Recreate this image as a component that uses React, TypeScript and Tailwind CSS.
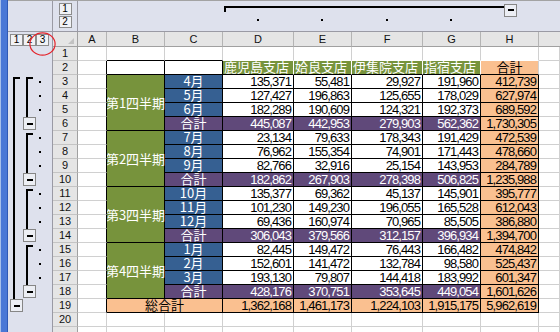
import React from 'react';

const NUM = "font-['Liberation_Sans',sans-serif] text-[13px] tracking-[-0.9px] leading-[13px] overflow-hidden";
const CJK = "font-['Noto_Sans_CJK_JP',sans-serif] text-[13px] leading-[13px] pb-[1px]";
const HDR = "font-['Liberation_Sans',sans-serif] text-[11px] leading-[13px] text-[#111]";
const BTN =
  "w-[13px] h-[12px] border border-[#8c8c8c] bg-[#f1f2f6] flex items-center justify-center font-['Liberation_Sans',sans-serif] text-[10px] leading-none text-black";

type Bg = 'w' | 'g' | 'b' | 'p' | 'o';
const BG: Record<Bg, string> = {
  w: 'bg-white',
  g: 'bg-[#77933c]',
  b: 'bg-[#366092]',
  p: 'bg-[#60497a]',
  o: 'bg-[#fac090]',
};
type Bd = 'k' | 'x' | 'n';
const BR: Record<Bd, string> = { k: 'border-r-black', x: 'border-r-[#d0d0d0]', n: 'border-r-white' };
const BB: Record<Bd, string> = { k: 'border-b-black', x: 'border-b-[#d0d0d0]', n: 'border-b-white' };

const data: Record<number, string[]> = {
  3: ['135,371', '55,481', '29,927', '191,960', '412,739'],
  4: ['127,427', '196,863', '125,655', '178,029', '627,974'],
  5: ['182,289', '190,609', '124,321', '192,373', '689,592'],
  6: ['445,087', '442,953', '279,903', '562,362', '1,730,305'],
  7: ['23,134', '79,633', '178,343', '191,429', '472,539'],
  8: ['76,962', '155,354', '74,901', '171,443', '478,660'],
  9: ['82,766', '32,916', '25,154', '143,953', '284,789'],
  10: ['182,862', '267,903', '278,398', '506,825', '1,235,988'],
  11: ['135,377', '69,362', '45,137', '145,901', '395,777'],
  12: ['101,230', '149,230', '196,055', '165,528', '612,043'],
  13: ['69,436', '160,974', '70,965', '85,505', '386,880'],
  14: ['306,043', '379,566', '312,157', '396,934', '1,394,700'],
  15: ['82,445', '149,472', '76,443', '166,482', '474,842'],
  16: ['152,601', '141,472', '132,784', '98,580', '525,437'],
  17: ['193,130', '79,807', '144,418', '183,992', '601,347'],
  18: ['428,176', '370,751', '353,645', '449,054', '1,601,626'],
  19: ['1,362,168', '1,461,173', '1,224,103', '1,915,175', '5,962,619'],
};
const months: Record<number, string> = {
  3: '4月', 4: '5月', 5: '6月', 7: '7月', 8: '8月', 9: '9月',
  11: '10月', 12: '11月', 13: '12月', 15: '1月', 16: '2月', 17: '3月',
};
const quarters: Record<number, string> = { 3: '第1四半期', 7: '第2四半期', 11: '第3四半期', 15: '第4四半期' };
const branches = ['鹿児島支店', '姶良支店', '伊集院支店', '指宿支店'];

type CellProps = {
  bg: Bg;
  r: Bd;
  b: Bd;
  text?: string;
  kind?: 'num' | 'cjk';
  align?: 'l' | 'c' | 'r';
  light?: boolean;
  extra?: string;
};

function Cell({ bg, r, b, text, kind, align = 'r', light, extra = '' }: CellProps) {
  const al = align === 'l' ? 'justify-start pl-[1px]' : align === 'c' ? 'justify-center' : 'justify-end pr-[2px]';
  const font = kind === 'cjk' ? CJK : NUM;
  const col = light ? 'text-white' : 'text-black';
  return (
    <div
      className={`${BG[bg]} border-r border-b ${BR[r]} ${BB[b]} flex items-end whitespace-nowrap ${al} ${font} ${col} ${extra}`}
    >
      {text}
    </div>
  );
}

function LeftOutline() {
  const groups = [0, 1, 2, 3];
  return (
    <svg width="44" height="294" className="block">
      <rect x="5" y="30" width="7" height="2" fill="#000" />
      <rect x="5" y="30" width="2" height="222" fill="#000" />
      <rect x="2.5" y="252.5" width="12" height="12" fill="#eceef4" stroke="#868686" />
      <rect x="6" y="258" width="6" height="2" fill="#000" />
      {groups.map((k) => (
        <g key={k}>
          <rect x="18" y={30 + 56 * k} width="7" height="2" fill="#000" />
          <rect x="18" y={30 + 56 * k} width="2" height="40" fill="#000" />
          <rect x="15.5" y={70.5 + 56 * k} width="12" height="12" fill="#eceef4" stroke="#868686" />
          <rect x="19" y={76 + 56 * k} width="6" height="2" fill="#000" />
          {[0, 1, 2].map((j) => (
            <rect key={j} x="31" y={34 + 14 * j + 56 * k} width="2" height="2" fill="#000" />
          ))}
        </g>
      ))}
    </svg>
  );
}

function TopOutline() {
  return (
    <svg width="316" height="30" className="block">
      <rect x="1" y="5" width="2" height="6" fill="#000" />
      <rect x="1" y="5" width="280" height="2" fill="#000" />
      <rect x="281.5" y="3.5" width="12" height="12" fill="#eceef4" stroke="#868686" />
      <rect x="285" y="8" width="6" height="2" fill="#000" />
      {[34, 98, 163, 227].map((x) => (
        <rect key={x} x={x} y="18" width="2" height="2" fill="#000" />
      ))}
    </svg>
  );
}

function renderRow(r: number) {
  const cells: React.ReactNode[] = [];
  if (r === 1) {
    cells.push(
      <div key="ol" className="row-span-21 bg-[#dee1ed] border-r border-r-[#9a9aa4]">
        <LeftOutline />
      </div>
    );
  }
  cells.push(
    <div
      key="rh"
      className={`bg-[#e5e5e5] border-r border-b border-r-[#a0a0a0] border-b-[#c4c4c4] flex items-center justify-center ${HDR}`}
    >
      {r <= 20 ? r : ''}
    </div>
  );
  cells.push(<Cell key="A" bg="w" r={r >= 2 && r <= 19 ? 'k' : 'x'} b="x" />);
  if (r === 1) cells.push(<Cell key="B" bg="w" r="x" b="k" />);
  else if (r === 2) cells.push(<Cell key="B" bg="w" r="k" b="k" />);
  else if (quarters[r])
    cells.push(
      <Cell key="B" bg="g" r="k" b="k" text={quarters[r]} kind="cjk" align="c" light extra="row-span-4 !items-center" />
    );
  else if (r === 19)
    cells.push(<Cell key="B" bg="o" r="k" b="k" text="総合計" kind="cjk" align="c" extra="col-span-2" />);
  else if (r >= 20) cells.push(<Cell key="B" bg="w" r="x" b="x" />);
  if (r === 1) cells.push(<Cell key="C" bg="w" r="x" b="k" />);
  else if (r === 2) cells.push(<Cell key="C" bg="w" r="k" b="k" />);
  else if (r >= 3 && r <= 18) {
    const m = months[r];
    cells.push(
      <Cell key="C" bg={m ? 'b' : 'p'} r="k" b="k" text={m ?? '合計'} kind="cjk" align="c" light />
    );
  } else if (r >= 20) cells.push(<Cell key="C" bg="w" r="x" b="x" />);
  for (let i = 0; i < 4; i++) {
    const k = 'DEFG'[i];
    if (r === 1) cells.push(<Cell key={k} bg="w" r="x" b="n" />);
    else if (r === 2)
      cells.push(<Cell key={k} bg="g" r="n" b="k" text={branches[i]} kind="cjk" align="l" light />);
    else if (r >= 3 && r <= 18) {
      const tot = r % 4 === 2;
      cells.push(<Cell key={k} bg={tot ? 'p' : 'w'} r="k" b="k" text={data[r][i]} light={tot} />);
    } else if (r === 19) cells.push(<Cell key={k} bg="o" r="k" b="k" text={data[r][i]} />);
    else cells.push(<Cell key={k} bg="w" r="x" b="x" />);
  }
  if (r === 1) cells.push(<Cell key="H" bg="w" r="x" b="n" />);
  else if (r === 2) cells.push(<Cell key="H" bg="o" r="x" b="k" text="合計" kind="cjk" align="c" />);
  else if (r >= 3 && r <= 19) cells.push(<Cell key="H" bg="o" r="k" b="k" text={data[r][4]} />);
  else cells.push(<Cell key="H" bg="w" r="x" b="x" />);
  cells.push(<Cell key="I" bg="w" r="x" b="x" />);
  return <React.Fragment key={r}>{cells}</React.Fragment>;
}

export default function App() {
  const rows = Array.from({ length: 21 }, (_, i) => i + 1);
  const letters = ['A', 'B', 'C', 'D', 'E', 'F', 'G', 'H'];
  return (
    <div className="relative w-[560px] h-[332px] overflow-hidden flex bg-white">
      <div className="w-[8px] h-full flex shrink-0">
        <div className="w-[1px] bg-[#a6bfea]" />
        <div className="w-[6px] bg-[#4a78d6]" />
        <div className="w-[1px] bg-[#2f59b5]" />
      </div>
      <div className="flex-1 flex flex-col">
        <div className="h-[4px] bg-[#fafafa] border-b border-b-[#a3a3a3]" />
        <div className="grid grid-cols-[45px_25px_29px_58px_58px_71px_58px_71px_58px_58px_1fr] grid-rows-[31px_15px_repeat(21,14px)]">
          <div className="bg-[#dee1ed] border-r border-b border-r-[#9a9aa4] border-b-[#9a9aa4]" />
          <div className="bg-[#dee1ed] border-r border-b border-r-[#9a9aa4] border-b-[#9a9aa4] flex flex-col items-center pt-[2px] gap-[1px]">
            <div className={BTN}>1</div>
            <div className={BTN}>2</div>
          </div>
          <div className="col-span-3 bg-[#dee1ed] border-b border-b-[#9a9aa4]" />
          <div className="col-span-5 bg-[#dee1ed] border-b border-b-[#9a9aa4]">
            <TopOutline />
          </div>
          <div className="bg-[#dee1ed] border-b border-b-[#9a9aa4]" />
          <div className="bg-[#dee1ed] border-r border-r-[#9a9aa4] flex pl-[2px] pt-[2px] gap-[0px]">
            <div className={BTN}>1</div>
            <div className={BTN}>2</div>
            <div className={BTN}>3</div>
          </div>
          <div className="bg-[#e5e5e5] border-r border-b border-r-[#a0a0a0] border-b-[#a0a0a0] flex items-end justify-end pr-[3px] pb-[2px]">
            <svg width="6" height="6" className="block">
              <polygon points="6,0 6,6 0,6" fill="#c2c2c2" />
            </svg>
          </div>
          {letters.map((l) => (
            <div
              key={l}
              className={`bg-[#e5e5e5] border-r border-b border-r-[#b4b4b4] border-b-[#a0a0a0] flex items-center justify-center ${HDR}`}
            >
              {l}
            </div>
          ))}
          <div className="bg-[#e5e5e5] border-b border-b-[#a0a0a0]" />
          {rows.map((r) => renderRow(r))}
        </div>
      </div>
      <svg className="absolute left-[29px] top-[32px]" width="27" height="24">
        <ellipse cx="13.5" cy="12" rx="12.6" ry="11.2" fill="none" stroke="#e4232b" strokeWidth="1.2" />
      </svg>
    </div>
  );
}
